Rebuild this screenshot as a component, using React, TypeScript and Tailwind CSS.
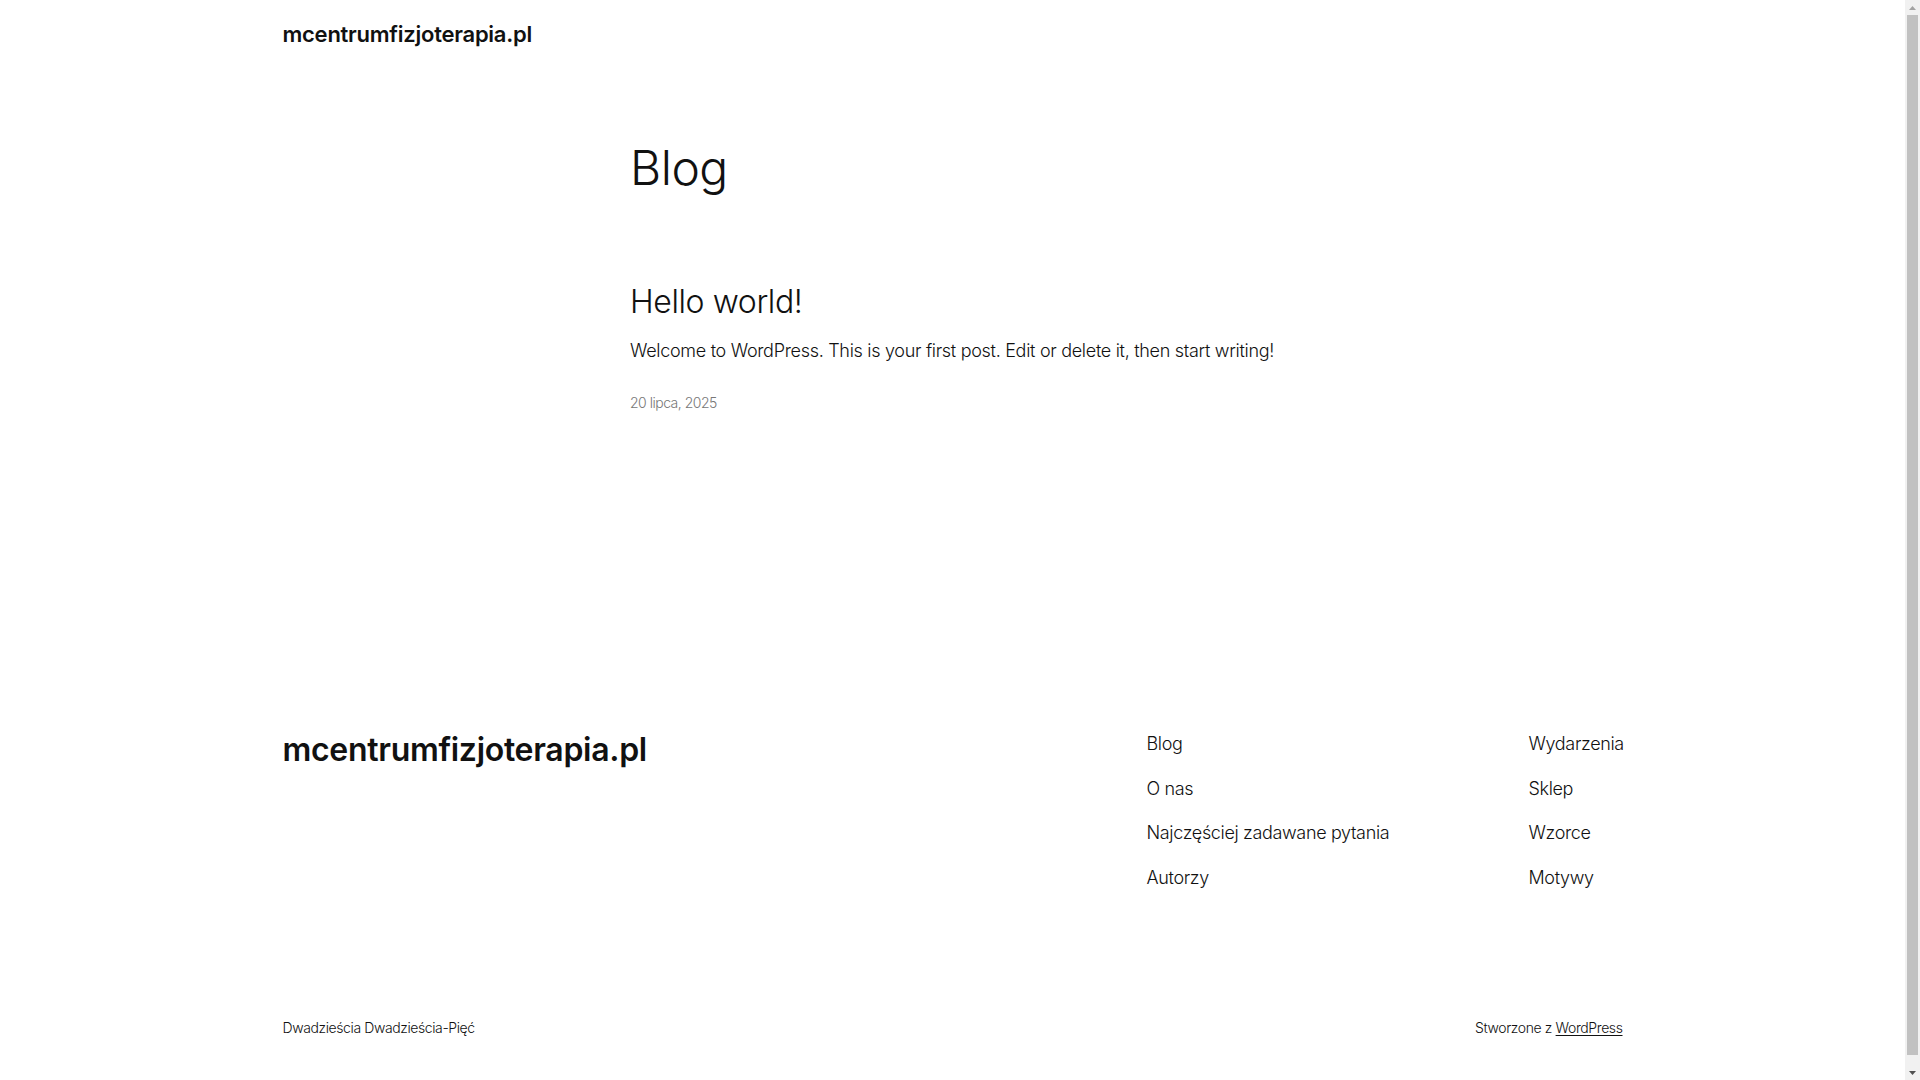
const navLeft = ['Blog', 'O nas', 'Najczęściej zadawane pytania', 'Autorzy'];
const navRight = ['Wydarzenia', 'Sklep', 'Wzorce', 'Motywy'];

function NavColumn({ items, className }: { items: string[]; className: string }) {
  return (
    <ul className={`flex flex-col gap-[19.5px] ${className}`}>
      {items.map((item) => (
        <li key={item} className="text-[18px] leading-[25px] font-light tracking-[-0.35px] whitespace-nowrap">
          <a href="#">{item}</a>
        </li>
      ))}
    </ul>
  );
}

// the browser's classic scrollbar, as it shows in the screenshot
function Scrollbar() {
  return (
    <div className="fixed top-0 right-0 flex h-screen w-[15px] flex-col bg-[#f1f1f1]">
      <div className="flex h-[15px] items-center justify-center">
        <svg width="7" height="4" viewBox="0 0 7 4">
          <path d="M0 4 L3.5 0 L7 4 Z" fill="#a3a3a3" />
        </svg>
      </div>
      <div className="mx-[2px] mb-[10px] flex-1 bg-[#c1c1c1]" />
      <div className="flex h-[15px] items-center justify-center">
        <svg width="7" height="4" viewBox="0 0 7 4">
          <path d="M0 0 L3.5 4 L7 0 Z" fill="#505050" />
        </svg>
      </div>
    </div>
  );
}

export default function App() {
  return (
    <div className="min-h-[1097px] w-[1905px] bg-white text-[#111111] font-['Inter','Liberation_Sans',sans-serif]">
      <header className="mx-auto flex h-[68px] w-[1340px] items-center">
        <a href="#" className="text-[22px] leading-[28px] font-semibold tracking-[-0.25px]">
          mcentrumfizjoterapia.pl
        </a>
      </header>

      <main className="mx-auto w-[645px] pt-[73px]">
        <h1 className="text-[48px] leading-[54px] font-light tracking-[-0.5px]">Blog</h1>

        <article className="mt-[89px]">
          <h2 className="text-[32px] leading-[36px] font-light tracking-[-0.4px]">
            <a href="#">Hello world!</a>
          </h2>
          <p className="mt-[18px] text-[18px] leading-[25px] font-light tracking-[-0.3px]">
            Welcome to WordPress. This is your first post. Edit or delete it, then start writing!
          </p>
          <div className="mt-[30px] text-[14px] leading-[20px] font-light tracking-[-0.5px] text-[#777777]">
            20 lipca, 2025
          </div>
        </article>
      </main>

      <footer className="mx-auto mt-[318px] w-[1340px] pb-[60px]">
        <div className="flex items-start justify-between">
          <a href="#" className="mt-[1px] text-[32px] leading-[36px] font-semibold tracking-[-0.3px]">
            mcentrumfizjoterapia.pl
          </a>
          <div className="flex">
            <NavColumn items={navLeft} className="w-[382px]" />
            <NavColumn items={navRight} className="w-[94px]" />
          </div>
        </div>

        <div className="mt-[128px] flex items-center justify-between text-[14px] leading-[20px] font-light tracking-[-0.4px]">
          <p>Dwadzieścia Dwadzieścia-Pięć</p>
          <p>
            Stworzone z{' '}
            <a href="#" className="underline underline-offset-2">
              WordPress
            </a>
          </p>
        </div>
      </footer>

      <Scrollbar />
    </div>
  );
}
